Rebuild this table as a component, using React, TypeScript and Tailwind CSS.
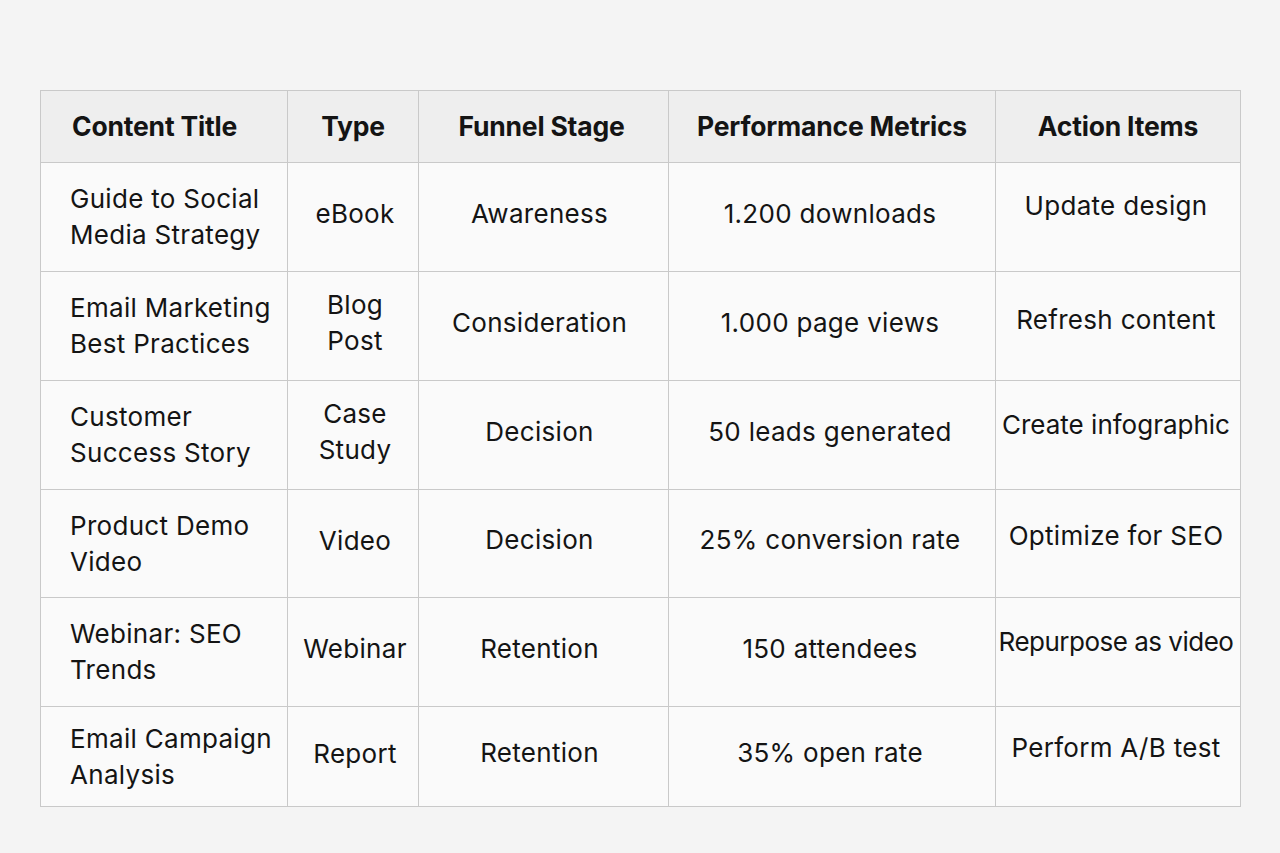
import React from "react";

const rows = [
  { title: ["Guide to Social", "Media Strategy"], type: ["eBook"], stage: "Awareness", metric: "1.200 downloads", action: "Update design", h: "h-[109px]", ap: "pb-[22px]" },
  { title: ["Email Marketing", "Best Practices"], type: ["Blog", "Post"], stage: "Consideration", metric: "1.000 page views", action: "Refresh content", h: "h-[109px]", ap: "pb-[12px]" },
  { title: ["Customer", "Success Story"], type: ["Case", "Study"], stage: "Decision", metric: "50 leads generated", action: "Create infographic", h: "h-[109px]", ap: "pb-[20px]" },
  { title: ["Product Demo", "Video"], type: ["Video"], stage: "Decision", metric: "25% conversion rate", action: "Optimize for SEO", h: "h-[108px]", ap: "pb-[16px]" },
  { title: ["Webinar: SEO", "Trends"], type: ["Webinar"], stage: "Retention", metric: "150 attendees", action: "Repurpose as video", h: "h-[109px]", ap: "pb-[20px]" },
  { title: ["Email Campaign", "Analysis"], type: ["Report"], stage: "Retention", metric: "35% open rate", action: "Perform A/B test", h: "h-[100px]", ap: "pb-[18px]" },
];

const cell = "border border-[#c9c9c9] align-middle";

export default function App() {
  return (
    <div className="min-h-[853px] w-full bg-[#f4f4f4] pt-[90px] pl-[40px] font-['Inter',sans-serif] text-[#141414]">
      <table className="w-[1200px] table-fixed border-collapse bg-[#fafafa]">
        <colgroup>
          <col className="w-[247px]" />
          <col className="w-[131px]" />
          <col className="w-[250px]" />
          <col className="w-[327px]" />
          <col className="w-[245px]" />
        </colgroup>
        <thead>
          <tr className="h-[72px] bg-[#eeeeee] text-[26.5px] font-semibold tracking-[-0.2px]">
            <th className={`${cell} pl-[31px] text-left`}>Content Title</th>
            <th className={`${cell} text-center`}>Type</th>
            <th className={`${cell} text-center pr-[4px]`}>Funnel Stage</th>
            <th className={`${cell} text-center`}>Performance Metrics</th>
            <th className={`${cell} text-center`}>Action Items</th>
          </tr>
        </thead>
        <tbody className="text-[26px] leading-[36px] tracking-[0.3px]">
          {rows.map((r, i) => (
            <tr key={i} className={r.h}>
              <td className={`${cell} pl-[29px] pr-0 text-left whitespace-nowrap`}>
                {r.title.map((t, j) => (
                  <div key={j}>{t}</div>
                ))}
              </td>
              <td className={`${cell} text-center pb-[6px] pl-[4px]`}>
                {r.type.map((t, j) => (
                  <div key={j}>{t}</div>
                ))}
              </td>
              <td className={`${cell} text-center pb-[7px] pr-[8px]`}>{r.stage}</td>
              <td className={`${cell} text-center pb-[7px] pr-[4px]`}>{r.metric}</td>
              <td
                className={`${cell} text-center ${r.ap} pr-[4px] whitespace-nowrap ${
                  i === 4 ? "tracking-[-0.5px]" : i === 2 ? "tracking-[0px]" : ""
                }`}
              >
                {r.action}
              </td>
            </tr>
          ))}
        </tbody>
      </table>
    </div>
  );
}
